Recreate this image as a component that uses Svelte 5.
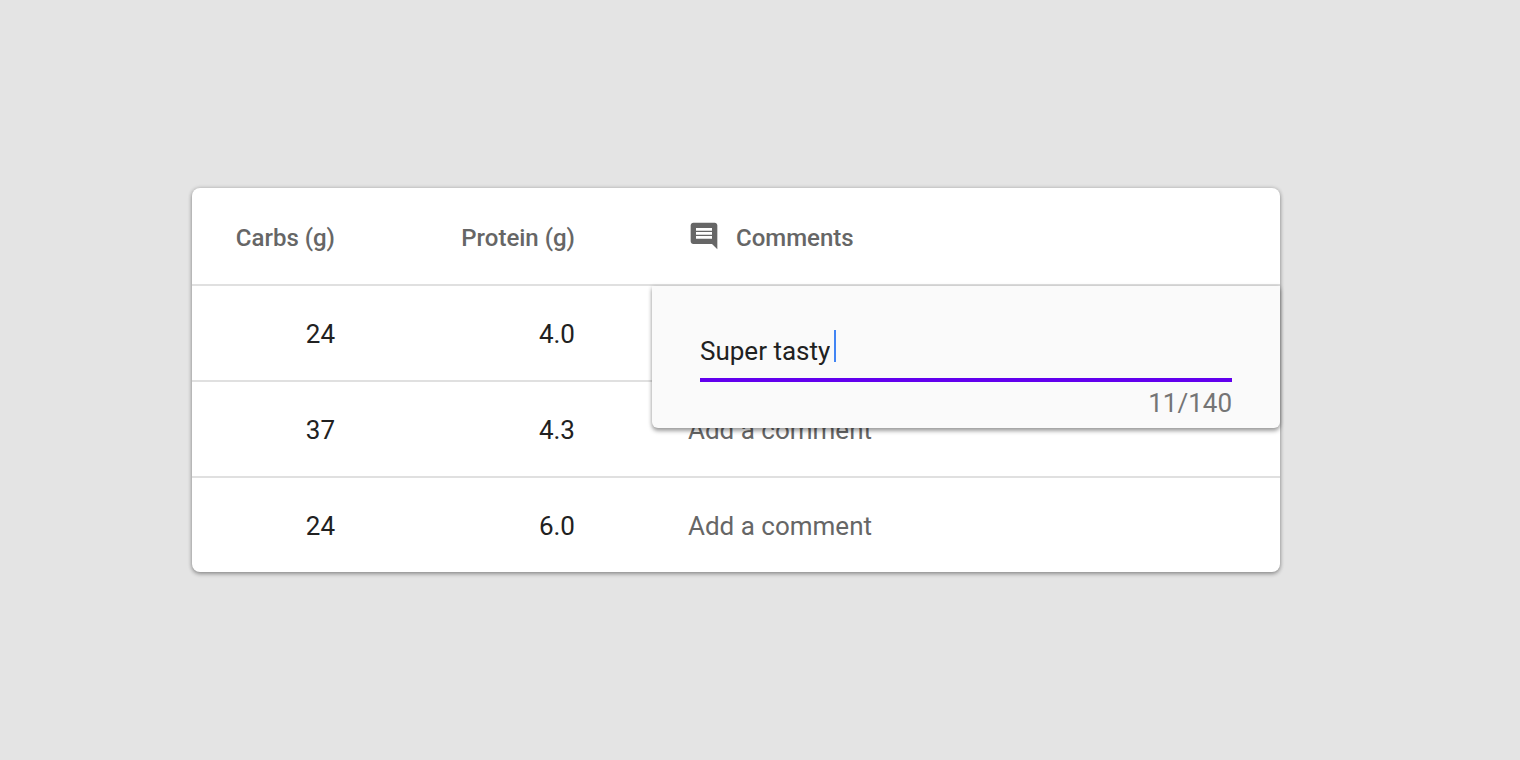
<script>
  const maxLength = 140;

  let rows = $state([
    { carbs: '24', protein: '4.0', comment: 'Super tasty' },
    { carbs: '37', protein: '4.3', comment: '' },
    { carbs: '24', protein: '6.0', comment: '' }
  ]);
  let editing = $state(0);
</script>

<main>
  <table>
    <colgroup>
      <col class="col-carbs" />
      <col class="col-protein" />
      <col />
    </colgroup>
    <thead>
      <tr>
        <th class="number" scope="col">Carbs (g)</th>
        <th class="number" scope="col">Protein (g)</th>
        <th class="comment" scope="col">
          <span class="heading">
            <svg viewBox="0 0 24 24" aria-hidden="true">
              <path
                d="M20 2H4c-1.1 0-2 .9-2 2v12c0 1.1.9 2 2 2h14l4 4V4c0-1.1-.9-2-2-2zm-2 12H6v-2h12v2zm0-3H6V9h12v2zm0-3H6V6h12v2z"
              />
            </svg>
            Comments
          </span>
        </th>
      </tr>
    </thead>
    <tbody>
      {#each rows as row, i}
        <tr>
          <td class="number">{row.carbs}</td>
          <td class="number">{row.protein}</td>
          <td class="comment">
            {#if editing === i}
              <div class="editor">
                <label class="field">
                  <input
                    type="text"
                    aria-label="Comment"
                    maxlength={maxLength}
                    bind:value={row.comment}
                  />
                  <span class="caret"></span>
                </label>
                <div class="counter">{row.comment.length}/{maxLength}</div>
              </div>
            {:else}
              <button type="button" onclick={() => (editing = i)}>
                {row.comment || 'Add a comment'}
              </button>
            {/if}
          </td>
        </tr>
      {/each}
    </tbody>
  </table>
</main>

<style>
  :global(body) {
    margin: 0;
    background: #e4e4e4;
  }

  main {
    padding: 188px 240px 188px 192px;
    font-family: Roboto, sans-serif;
    font-size: 26px;
    line-height: 32px;
    color: #212121;
  }

  table {
    width: 100%;
    table-layout: fixed;
    border-collapse: separate;
    border-spacing: 0;
    background: #fff;
    border-radius: 8px;
    box-shadow:
      0 2px 4px rgba(0, 0, 0, 0.32),
      0 0 4px rgba(0, 0, 0, 0.18);
  }

  .col-carbs {
    width: 220px;
  }

  .col-protein {
    width: 240px;
  }

  th,
  td {
    padding: 32px 0 30px;
    font-weight: 400;
    text-align: left;
    border-bottom: 2px solid #e0e0e0;
  }

  th {
    padding: 34px 0 30px;
    font-size: 24px;
    font-weight: 500;
    color: #666;
  }

  tbody tr:last-child td {
    border-bottom: 0;
  }

  .number {
    padding-right: 77px;
    text-align: right;
  }

  .comment {
    position: relative;
    padding-left: 36px;
  }

  .heading {
    display: flex;
    align-items: center;
    gap: 16px;
  }

  svg {
    width: 32px;
    height: 32px;
    margin: -2px 0 2px;
    fill: #666;
  }

  button {
    display: block;
    padding: 0;
    border: 0;
    background: none;
    font: inherit;
    color: #666;
    cursor: pointer;
  }

  .editor {
    position: absolute;
    z-index: 1;
    top: 0;
    left: 0;
    right: 0;
    padding: 44px 48px 4px;
    background: #fafafa;
    border-radius: 0 0 6px 6px;
    box-shadow:
      0 3px 4px rgba(0, 0, 0, 0.36),
      0 0 4px rgba(0, 0, 0, 0.12);
  }

  .field {
    display: flex;
    align-items: flex-start;
    gap: 4px;
    height: 48px;
    border-bottom: 4px solid #6200ee;
    cursor: text;
  }

  input {
    field-sizing: content;
    height: 42px;
    max-width: 100%;
    padding: 0;
    border: 0;
    outline: 0;
    background: none;
    font: inherit;
    color: inherit;
    caret-color: transparent;
  }

  .caret {
    width: 2px;
    height: 32px;
    background: #4285f4;
  }

  .counter {
    line-height: 42px;
    text-align: right;
    color: #757575;
  }
</style>
